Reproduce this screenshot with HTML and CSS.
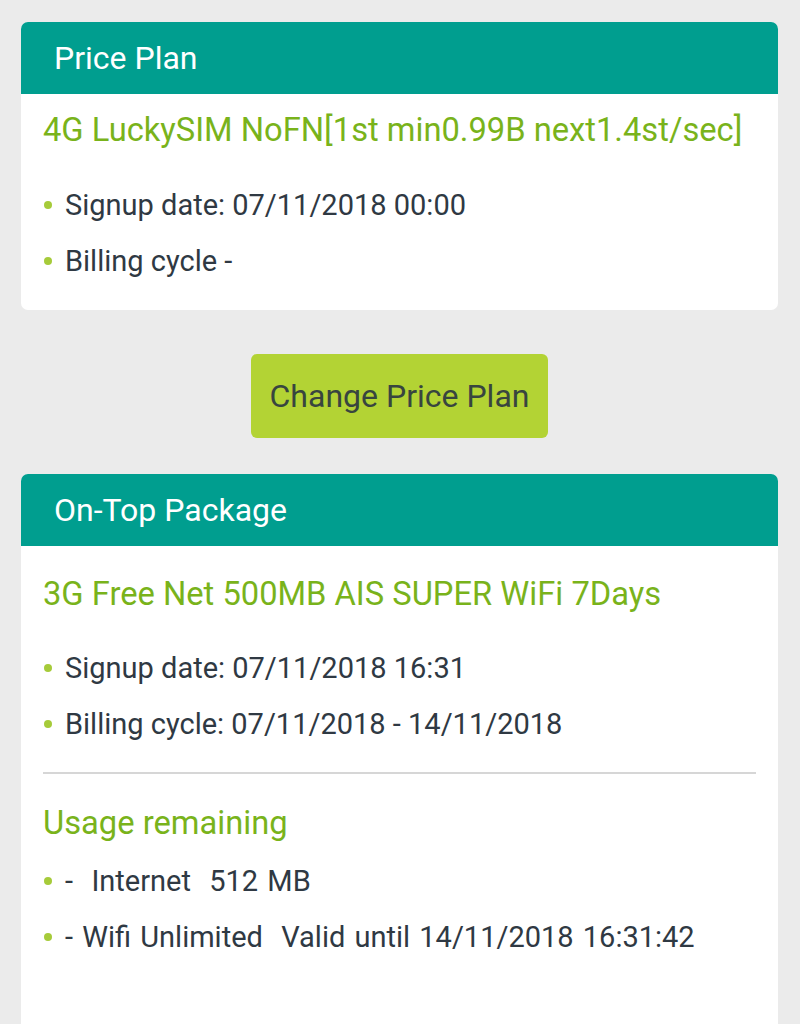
FILE: index.html
```html
<!DOCTYPE html>
<html>
<head>
<meta charset="utf-8">
<link rel="stylesheet" href="styles.css">
</head>
<body>
<div class="page">
  <section class="card card-plan">
    <div class="card-head">Price Plan</div>
    <div class="card-body body-plan">
      <div class="title">4G LuckySIM NoFN[1st min0.99B next1.4st/sec]</div>
      <ul class="list">
        <li>Signup date: 07/11/2018 00:00</li>
        <li>Billing cycle -</li>
      </ul>
    </div>
  </section>

  <div class="btn-row">
    <button class="btn">Change Price Plan</button>
  </div>

  <section class="card card-ontop">
    <div class="card-head">On-Top Package</div>
    <div class="card-body body-ontop">
      <div class="title">3G Free Net 500MB AIS SUPER WiFi 7Days</div>
      <ul class="list">
        <li>Signup date: 07/11/2018 16:31</li>
        <li>Billing cycle: 07/11/2018 - 14/11/2018</li>
      </ul>
      <hr class="divider">
      <div class="title usage">Usage remaining</div>
      <ul class="list list-usage">
        <li>-&nbsp; Internet&nbsp; 512 MB</li>
        <li>- Wifi Unlimited&nbsp; Valid until 14/11/2018 16:31:42</li>
      </ul>
    </div>
  </section>
</div>
</body>
</html>
```

FILE: styles.css
```css
* { box-sizing: border-box; }
html, body {
  margin: 0;
  padding: 0;
  background: #ebebeb;
  font-family: Roboto, "Noto Sans", "Liberation Sans", sans-serif;
}
.page {
  padding: 22px 22px 0 21px;
  height: 1024px;
  overflow: hidden;
}
.card {
  background: #ffffff;
  border-radius: 7px;
  overflow: hidden;
}
.card-head {
  height: 72px;
  background: #009e8f;
  color: #ffffff;
  font-size: 32px;
  line-height: 72px;
  padding-left: 33px;
}
.card-body {
  padding: 0 22px;
}
.body-plan { padding-top: 16px; padding-bottom: 21px; }
.body-ontop { padding-top: 28px; padding-bottom: 80px; }
.title {
  color: #79b31b;
  font-size: 32.7px;
  line-height: 40px;
}
.list {
  list-style: none;
  margin: 27px 0 0 0;
  padding: 0;
}
.body-ontop .list { margin-top: 26px; }
.list li {
  display: flex;
  align-items: center;
  gap: 13px;
  padding-left: 1px;
  color: #2f3943;
  font-size: 29px;
  line-height: 56px;
}
.list li::before {
  content: "";
  width: 8px;
  height: 8px;
  border-radius: 50%;
  background: #a6cb3a;
  flex: none;
}
.list-usage li { word-spacing: 2px; }
.divider {
  border: 0;
  border-top: 2px solid #d6d6d6;
  margin: 20px 0 0 0;
}
.usage { margin-top: 29px; }
.body-ontop .list-usage { margin-top: 10px; }
.btn-row {
  display: flex;
  justify-content: center;
  padding: 44px 0 36px 0;
}
.btn {
  width: 297px;
  height: 84px;
  border: 0;
  border-radius: 6px;
  background: #b3d334;
  color: #38453f;
  font-family: Roboto, "Noto Sans", "Liberation Sans", sans-serif;
  font-size: 32px;
  padding: 0;
}
```
